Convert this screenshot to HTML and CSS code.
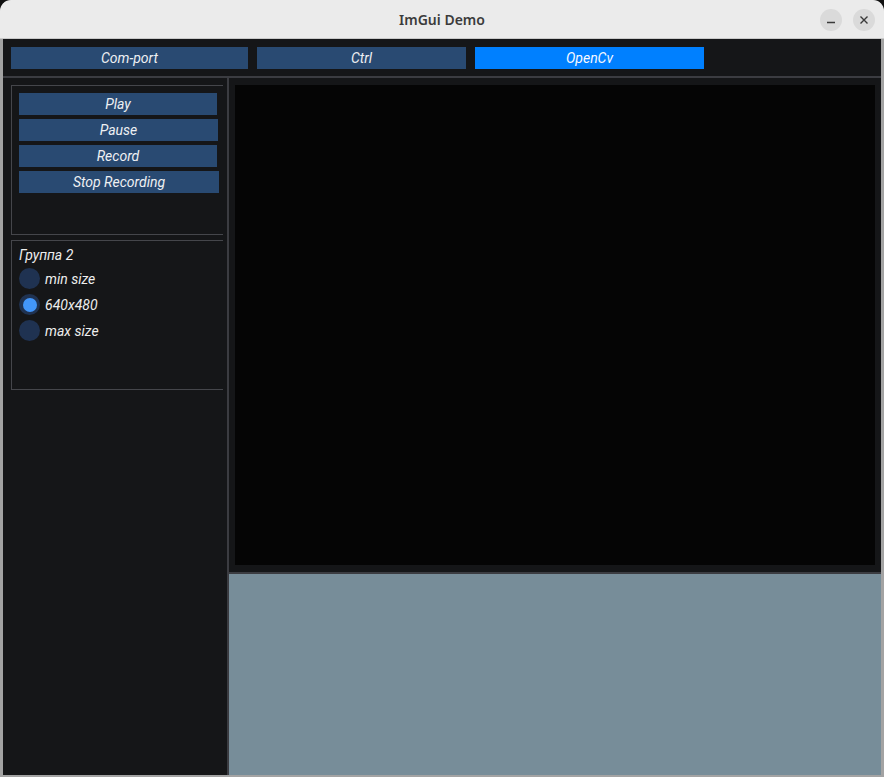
FILE: index.html
```html
<!DOCTYPE html>
<html>
<head>
<meta charset="utf-8">
<link rel="stylesheet" href="styles.css">
</head>
<body>
<div class="window">
  <div class="titlebar">
    <div class="title">ImGui Demo</div>
    <div class="wbtns">
      <div class="wbtn"><svg width="10" height="10" viewBox="0 0 10 10"><path d="M1 7.5h8" stroke="#3a3a3a" stroke-width="1.3"/></svg></div>
      <div class="wbtn"><svg width="10" height="10" viewBox="0 0 10 10"><path d="M1.5 1.5l7 7M8.5 1.5l-7 7" stroke="#3a3a3a" stroke-width="1.4"/></svg></div>
    </div>
  </div>
  <div class="content">
    <div class="menubar">
      <div class="tab tab-com">Com-port</div>
      <div class="tab tab-ctrl">Ctrl</div>
      <div class="tab tab-cv active">OpenCv</div>
    </div>
    <div class="hsep"></div>
    <div class="main">
      <div class="left">
        <div class="group g1">
          <div class="btn b1">Play</div>
          <div class="btn b2">Pause</div>
          <div class="btn b1">Record</div>
          <div class="btn b3">Stop Recording</div>
        </div>
        <div class="group g2">
          <div class="glabel">Группа 2</div>
          <div class="radio"><span class="dot"></span><span>min size</span></div>
          <div class="radio"><span class="dot on"></span><span>640x480</span></div>
          <div class="radio"><span class="dot"></span><span>max size</span></div>
        </div>
      </div>
      <div class="vsep"></div>
      <div class="right">
        <div class="viewer"><div class="image"></div></div>
        <div class="hsep"></div>
        <div class="bottom"></div>
      </div>
    </div>
  </div>
</div>
</body>
</html>
```

FILE: styles.css
```css
* { box-sizing: border-box; }
html, body { margin: 0; padding: 0; }
body {
  width: 884px; height: 777px; overflow: hidden;
  background: #101010;
  font-family: Roboto, "Noto Sans", sans-serif;
}
.window {
  width: 884px; height: 777px;
  display: flex; flex-direction: column;
  border-radius: 11px 11px 0 0;
  overflow: hidden;
  background: #a3a3a3;
  padding: 0 3px 2px 3px;
}
.titlebar {
  height: 39px; flex: none;
  margin: 0 -3px;
  background: #ebebeb;
  border-bottom: 1px solid #c9c9c9;
  border-radius: 11px 11px 0 0;
  display: flex; align-items: center; justify-content: center;
  position: relative;
}
.title {
  font-family: "Noto Sans", sans-serif;
  font-weight: 600; font-size: 14px; color: #3b3b3b;
  margin-top: 1px;
}
.wbtns {
  position: absolute; right: 9px; top: 9px;
  display: flex; gap: 11px;
}
.wbtn {
  width: 22px; height: 22px; border-radius: 50%;
  background: #dadada;
  display: flex; align-items: center; justify-content: center;
}
.content {
  flex: 1; display: flex; flex-direction: column;
  background: #151618;
  min-height: 0;
}
.menubar {
  height: 37px; flex: none;
  display: flex; gap: 9px;
  padding: 8px 8px 0 8px;
}
.tab {
  height: 22px;
  background: #294a72;
  color: #eef0f3;
  font-style: italic; font-size: 14px;
  display: flex; align-items: center; justify-content: center;
}
.tab-com { width: 237px; }
.tab-ctrl { width: 209px; }
.tab-cv { width: 229px; }
.tab.active { background: #0080ff; color: #f6f9ff; }
.hsep { height: 2px; background: #3b3c41; flex: none; }
.main { flex: 1; display: flex; min-height: 0; }
.left {
  width: 224px; flex: none;
  padding: 7px 0 0 8px;
  display: flex; flex-direction: column; gap: 5px;
}
.vsep { width: 2px; background: #3b3c41; flex: none; }
.group {
  width: 212px; height: 150px;
  border: 1px solid #45464b; border-right: none;
  padding: 7px 0 0 7px;
  display: flex; flex-direction: column;
}
.g1 { gap: 4px; }
.btn {
  height: 22px;
  background: #294a72;
  color: #eef0f3;
  font-style: italic; font-size: 14px;
  display: flex; align-items: center; justify-content: center;
}
.b1 { width: 198px; }
.b2 { width: 199px; }
.b3 { width: 200px; }
.g2 { padding-top: 6px; color: #eeeeee; font-style: italic; font-size: 14px; }
.glabel { height: 17px; line-height: 17px; margin-bottom: 4px; }
.radio {
  display: flex; align-items: center; gap: 5px;
  height: 21px; margin-bottom: 5px;
}
.dot {
  width: 21px; height: 21px; border-radius: 50%;
  background: #1f3251;
  display: flex; align-items: center; justify-content: center;
}
.dot.on::after {
  content: ""; width: 14px; height: 14px; border-radius: 50%;
  background: #4296fa;
}
.right { flex: 1; display: flex; flex-direction: column; min-width: 0; }
.viewer { height: 494px; flex: none; padding: 7px 6px 7px 6px; }
.image { width: 100%; height: 100%; background: #050505; }
.bottom { flex: 1; background: #778d99; }
```
